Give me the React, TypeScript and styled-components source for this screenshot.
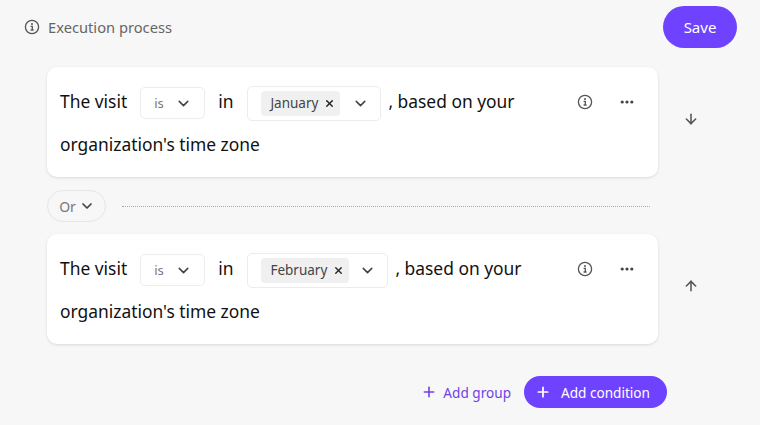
import React from "react";
import styled, { createGlobalStyle } from "styled-components";
import { ChevronDown, X, Plus, ArrowDown, ArrowUp } from "lucide-react";

const Global = createGlobalStyle`
  html, body { margin: 0; padding: 0; background: #f7f7f7; }
  body { font-family: "Noto Sans", "Open Sans", "Liberation Sans", sans-serif; }
  * { box-sizing: border-box; }
`;

const Page = styled.div`
  width: 760px;
  height: 425px;
  overflow: hidden;
  padding: 6px 23px 0 24px;
  display: flex;
  flex-direction: column;
`;
const Header = styled.header`
  display: flex;
  align-items: center;
  justify-content: space-between;
  height: 42px;
`;
const Title = styled.div`
  display: flex;
  align-items: center;
  gap: 8px;
  font-size: 14.7px;
  color: #666;
`;
const Save = styled.button`
  width: 74px;
  height: 42px;
  border: 0;
  border-radius: 21px;
  background: #6f42ff;
  color: #fff;
  font: inherit;
  font-size: 15px;
`;
const Rows = styled.div`
  margin: 19px 0 0 23px;
  display: flex;
  flex-direction: column;
`;
const Row = styled.div`
  display: flex;
  align-items: center;
`;
const Card = styled.section`
  width: 611px;
  height: 110px;
  border-radius: 10px;
  background: #fff;
  box-shadow: 0 1px 3px rgba(0, 0, 0, 0.12);
  padding: 13px 24px 0 13px;
  display: flex;
  justify-content: space-between;
`;
const Sentence = styled.div`
  width: 490px;
  font-size: 17.4px;
  line-height: 43px;
  color: #111;
`;
const SelectBox = styled.span<{ $w: number; $h: number; $pad: number; $before: number; $after: number }>`
  display: inline-flex;
  align-items: center;
  justify-content: space-between;
  width: ${(p) => p.$w}px;
  height: ${(p) => p.$h}px;
  margin: 0 ${(p) => p.$after}px 0 ${(p) => p.$before}px;
  padding: 0 ${(p) => p.$pad}px 0 13px;
  border: 1px solid #ececec;
  border-radius: 5px;
  vertical-align: middle;
  background: #fff;
  color: #777;
  font-size: 13px;
  line-height: 1;
`;
const Tag = styled.span`
  display: inline-flex;
  align-items: center;
  gap: 6px;
  height: 25px;
  padding: 0 5px 0 9px;
  border-radius: 4px;
  background: #f0f0f0;
  color: #444;
  font-size: 13.5px;
`;
const Actions = styled.div`
  display: flex;
  align-items: center;
  gap: 27px;
  height: 43px;
`;
const Side = styled.div`
  width: 65px;
  display: flex;
  justify-content: center;
  color: #555;
  margin-top: -6px;
`;
const OrRow = styled.div`
  display: flex;
  align-items: center;
  gap: 16px;
  height: 32px;
  margin: 13px 0 12px;
  width: 603px;
`;
const OrPill = styled.button`
  display: inline-flex;
  align-items: center;
  justify-content: center;
  gap: 3px;
  width: 59px;
  height: 32px;
  flex: none;
  border: 1px solid #e6e6e6;
  border-radius: 16px;
  background: transparent;
  color: #777;
  font: inherit;
  font-size: 14px;
  padding: 0 0 0 1px;
`;
const Dotted = styled.div`
  flex: 1;
  border-top: 1px dotted #aaa;
`;
const Footer = styled.div`
  display: flex;
  justify-content: flex-end;
  align-items: center;
  gap: 13px;
  margin: 32px 70px 0 0;
`;
const GroupLink = styled.button`
  display: inline-flex;
  align-items: center;
  gap: 6px;
  border: 0;
  padding: 0;
  background: transparent;
  color: #6f42e8;
  font: inherit;
  font-size: 13.6px;
`;
const AddButton = styled.button`
  display: inline-flex;
  align-items: center;
  gap: 10px;
  width: 143px;
  height: 32px;
  padding: 0 0 0 11px;
  border: 0;
  border-radius: 16px;
  background: #6f42ff;
  color: #fff;
  font: inherit;
  font-size: 13.6px;
`;

const InfoIcon = () => (
  <svg width={16} height={16} viewBox="0 0 16 16" fill="none">
    <circle cx="8" cy="8" r="6.6" stroke="#555" strokeWidth="1.3" />
    <circle cx="8" cy="5" r="1" fill="#555" />
    <path d="M6.6 7.3H8.3V10.8M6.6 11H9.6" stroke="#555" strokeWidth="1.3" />
  </svg>
);

const DotsIcon = () => (
  <svg width={14} height={14} viewBox="0 0 14 14" fill="#444">
    <circle cx="2.2" cy="7" r="1.6" />
    <circle cx="7" cy="7" r="1.6" />
    <circle cx="11.8" cy="7" r="1.6" />
  </svg>
);

const Group = ({ month, w, arrow }: { month: string; w: number; arrow: React.ReactNode }) => (
  <Row>
    <Card>
      <Sentence>
        The visit
        <SelectBox $w={65} $h={32} $pad={12} $before={13} $after={13}>
          is
          <ChevronDown size={17} color="#444" strokeWidth={2.2} />
        </SelectBox>
        in
        <SelectBox $w={w} $h={35} $pad={11} $before={14} $after={7}>
          <Tag>
            {month}
            <X size={11} color="#222" strokeWidth={3} />
          </Tag>
          <ChevronDown size={17} color="#444" strokeWidth={2.2} />
        </SelectBox>
        , based on your organization's time zone
      </Sentence>
      <Actions>
        <InfoIcon />
        <DotsIcon />
      </Actions>
    </Card>
    <Side>{arrow}</Side>
  </Row>
);

export default function App() {
  return (
    <Page>
      <Global />
      <Header>
        <Title>
          <InfoIcon />
          Execution process
        </Title>
        <Save>Save</Save>
      </Header>
      <Rows>
        <Group month="January" w={134} arrow={<ArrowDown size={16} strokeWidth={2.3} />} />
        <OrRow>
          <OrPill>
            Or
            <ChevronDown size={16} color="#444" strokeWidth={2.6} />
          </OrPill>
          <Dotted />
        </OrRow>
        <Group month="February" w={141} arrow={<ArrowUp size={16} strokeWidth={2.3} />} />
      </Rows>
      <Footer>
        <GroupLink>
          <Plus size={16} strokeWidth={2.4} />
          Add group
        </GroupLink>
        <AddButton>
          <Plus size={16} strokeWidth={2.6} />
          Add condition
        </AddButton>
      </Footer>
    </Page>
  );
}
